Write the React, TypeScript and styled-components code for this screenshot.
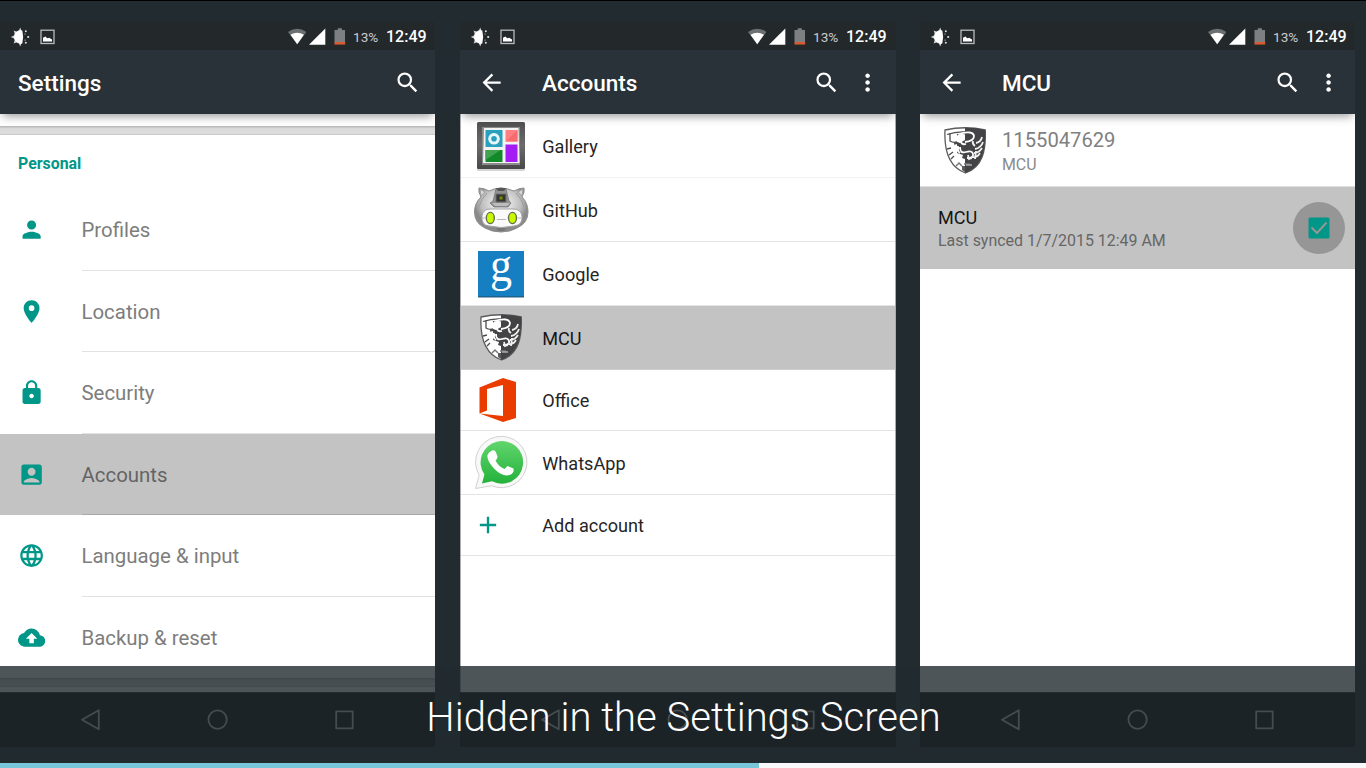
import React from 'react';
import styled, { createGlobalStyle, css } from 'styled-components';
import {
  MdPerson, MdPlace, MdLock, MdAccountBox, MdLanguage, MdBackup,
  MdSearch, MdArrowBack, MdMoreVert, MdAdd,
} from 'react-icons/md';

const TEAL = '#009688';

const GlobalStyle = createGlobalStyle`
  * { box-sizing: border-box; }
  body { margin: 0; background: #212b30; font-family: Roboto, sans-serif; overflow: hidden; }
  svg { display: block; flex: none; }
`;

const Slide = styled.main`
  position: relative;
  width: 1366px;
  height: 768px;
  background: #212b30;
  border-top: 1px solid #000;
  overflow: hidden;
`;

const Phones = styled.div`
  display: grid;
  grid-template-columns: 460px 460px 446px;
  padding-top: 21px;
`;

const Phone = styled.section<{ $wide?: boolean }>`
  display: flex;
  flex-direction: column;
  width: ${p => (p.$wide ? 436 : 435)}px;
  height: 725px;
  overflow: hidden;
`;

const StatusBar = styled.div<{ $wide?: boolean }>`
  display: flex;
  align-items: center;
  height: 28px;
  padding: 1px ${p => (p.$wide ? 9 : 8)}px 0 10px;
  background: #23282b;
  color: #fff;
`;

const StatusSpacer = styled.div`flex: 1;`;

const Percent = styled.span`
  width: 33px;
  margin-left: 7px;
  font-size: 13.6px;
  color: #c9cbcc;
  white-space: nowrap;
`;

const Clock = styled.span`
  width: 41px;
  font-size: 16px;
  font-weight: 500;
  white-space: nowrap;
`;

const AppBar = styled.header<{ $wide?: boolean }>`
  position: relative;
  z-index: 1;
  display: flex;
  align-items: center;
  flex: none;
  height: 64px;
  padding: 1px ${p => (p.$wide ? 15.5 : 14)}px 0 18px;
  background: #283238;
  color: #fff;
  box-shadow: 0 5px 9px -3px rgba(0, 0, 0, 0.42);
`;

const BackSlot = styled.div`width: 64px;`;

const Title = styled.h1`
  flex: 1;
  margin: 0;
  font-size: 22.5px;
  font-weight: 500;
`;

const MoreSlot = styled.div`margin: 0 -1px 0 14px;`;

const Body = styled.div<{ $edges?: boolean }>`
  flex: 1;
  display: flex;
  flex-direction: column;
  background: #fff;
  overflow: hidden;
  ${p => p.$edges && css`border: solid #a9adaf; border-width: 0 1px;`}
`;

const SectionGap = styled.div`
  flex: none;
  height: 9px;
  background: linear-gradient(#b4b4b4, #dadada 30%, #dedede 80%, #c6c6c6);
`;

const Blank = styled.div<{ $h: number }>`
  flex: none;
  height: ${p => p.$h}px;
`;

const Category = styled.h2`
  flex: none;
  height: 54px;
  margin: 0;
  padding: 18.5px 18px 0;
  font-size: 15.9px;
  line-height: 20px;
  font-weight: 700;
  color: ${TEAL};
`;

const Setting = styled.div<{ $active?: boolean }>`
  flex: none;
  display: grid;
  grid-template-columns: 81.5px 1fr;
  height: 81.5px;
  background: ${p => (p.$active ? '#c3c3c3' : 'transparent')};
`;

const SettingIcon = styled.div`
  display: flex;
  align-items: center;
  padding-left: 18px;
  color: ${TEAL};
`;

const SettingLabel = styled.div<{ $active?: boolean; $last?: boolean }>`
  display: flex;
  align-items: center;
  padding-top: 2px;
  font-size: 20.4px;
  color: ${p => (p.$active ? '#646464' : '#7d7d7d')};
  border-bottom: ${p => (p.$last ? 0 : 1.5)}px solid ${p => (p.$active ? '#a8a8a8' : '#e2e2e2')};
`;

const Account = styled.div<{ $h: number; $active?: boolean; $faint?: boolean }>`
  flex: none;
  display: grid;
  grid-template-columns: 81.3px 1fr;
  align-items: center;
  height: ${p => p.$h}px;
  font-size: 18.1px;
  color: ${p => (p.$active ? '#161616' : '#252525')};
  background: ${p => (p.$active ? '#c3c3c3' : 'transparent')};
  border-bottom: 1px solid ${p => (p.$active ? '#cfcfcf' : p.$faint ? '#f2f2f2' : '#e4e4e4')};
`;

const AccountLabel = styled.span`padding-top: 1px;`;

const AccountIcon = styled.div`
  padding-left: 12px;
  color: ${TEAL};
`;

const Identity = styled.div`
  display: grid;
  grid-template-columns: 82px 1fr;
  flex: none;
  height: 73px;
  align-items: center;
  border-bottom: 1px solid #dedede;
`;

const IdentityIcon = styled.div`padding-left: 24px;`;

const IdentityName = styled.div`
  margin-top: 4px;
  font-size: 20.2px;
  line-height: 25px;
  color: #808080;
`;

const IdentityType = styled.div`
  font-size: 15.9px;
  line-height: 23px;
  color: #8a8a8a;
`;

const SyncRow = styled.div`
  display: flex;
  align-items: center;
  justify-content: space-between;
  flex: none;
  height: 82px;
  padding: 0 10px 0 18px;
  background: #c3c3c3;
`;

const SyncTitle = styled.div`
  margin-top: 3px;
  font-size: 18.1px;
  line-height: 22px;
  color: #161616;
`;

const SyncTime = styled.div`
  font-size: 15.95px;
  line-height: 24px;
  color: #666;
`;

const Ripple = styled.div`
  display: grid;
  place-items: center;
  width: 52px;
  height: 52px;
  border-radius: 50%;
  background: #969696;
`;

const NavBar = styled.nav`
  display: flex;
  flex: none;
  justify-content: space-between;
  align-items: center;
  height: 55px;
  padding: 0 80px 1px 80px;
  background: #050505;
  border-top: 1px solid #30383b;
`;

const Caption = styled.div`
  position: absolute;
  left: 0;
  right: 0;
  top: 665px;
  height: 97px;
  padding: 25px 0 0 1px;
  background: rgba(33, 43, 48, 0.8);
  color: #fff;
  font-size: 40px;
  line-height: 54px;
  font-weight: 300;
  text-align: center;
  white-space: nowrap;
`;

const Track = styled.div`
  position: absolute;
  left: 0;
  right: 0;
  bottom: 0;
  height: 5px;
  background: #f9f8fb;
`;

const Progress = styled.div`
  width: 759px;
  height: 5px;
  background: #76c5d8;
`;

const StatusIcons = () => (
  <>
    <svg width="21" height="20" viewBox="0 0 21 20">
      <path d="M12.300 3.600Q14 10 12.300 16.400A6.600 6.600 0 0 1 3.900 10A6.600 6.600 0 0 1 12.300 3.600z" fill="#fff" />
      <path d="M10.200 .4l1.600 4H8.600zM10.200 19.400l1.600-4H8.600zM.8 10l4.200-2v4zM3.600 3.600l4.200 1.300-2.800 2.800zM3.600 16.400l4.200-1.300-2.800-2.800z" fill="#fff" opacity=".8" />
      <g fill="#fff" opacity=".85"><circle cx="15.800" cy="4.300" r="1" /><circle cx="18.200" cy="10" r="1.100" /><circle cx="15.800" cy="15.700" r="1" /><circle cx="15" cy="7" r=".6" /><circle cx="15" cy="13" r=".6" /></g>
    </svg>
    <svg width="24" height="20" viewBox="0 0 24 20">
      <rect x="10" y="3.200" width="13" height="13.300" fill="none" stroke="#b9bbbc" strokeWidth="1.3" />
      <path d="M12 14.600v-3.800l2.400-1.300 1.800 1.800 2-.6 2.800 1.800v2.100z" fill="#fff" />
    </svg>
    <StatusSpacer />
    <svg width="58" height="20" viewBox="0 0 58 20">
      <path d="M0 5Q9.200-1.700 18.400 5L9.200 17.300z" fill="#6c7072" />
      <path d="M2.500 7.800Q9.200 3.600 15.900 7.800L9.200 17.300z" fill="#fff" />
      <path d="M37.300 1.400v16.300H21z" fill="#fff" />
      <path d="M46.500 3h3.200V1.300h4.200V3H57v12.700H46.500z" fill="#7c8083" />
      <path d="M46.500 15h10.700v2.600H46.500z" fill="#d75a32" />
    </svg>
    <Percent>13%</Percent>
    <Clock>12:49</Clock>
  </>
);

const NavIcons = () => (
  <>
    <svg width="22" height="24" viewBox="0 0 22 24" fill="none" stroke="#cfcfcf" strokeWidth="1.8" strokeLinejoin="round"><path d="M18.800 2.300v19L2 11.800z" /></svg>
    <svg width="22" height="24" viewBox="0 0 22 24" fill="none" stroke="#cfcfcf" strokeWidth="1.8"><circle cx="10.600" cy="11.600" r="9.200" /></svg>
    <svg width="22" height="24" viewBox="0 0 22 24" fill="none" stroke="#cfcfcf" strokeWidth="1.8" strokeLinejoin="round"><rect x="3.200" y="3.300" width="16.500" height="17" /></svg>
  </>
);

const Shield = () => (
  <svg width="42" height="47" viewBox="0 0 42 47">
    <path d="M1 3Q21-1.500 41.300 3C42 23 39 40 21.500 46C5 40 0 23 1 3z" fill="#fff" stroke="#5c5c5e" strokeWidth="1.3" />
    <path d="M21 .8Q31 .6 41 3C42 23 38.500 40 21 46z" fill="#434345" />
    <path d="M3 7.500q9-3 18-2.500M6 6v8q3 2 7 1M13 8q4-3 8-1M14 16l-4 1M3 22l4-1M5 28l4-3M7 32l3-3" fill="none" stroke="#4c4c4e" strokeWidth="1.3" />
    <path d="M13 15l3 1 5-3v19l-3-1 1-3-6-2 1-3 2-2-3-2z" fill="#454547" />
    <path d="M12 39l3-3 3 3M20 37h6" fill="none" stroke="#777" strokeWidth="1.5" />
    <path d="M21 34v5h-3v4l3 2z" fill="#5a5a5c" />
    <path d="M14 7q15-4 16 2 0 5-9 6M17 15q1 3 5 2M16 20q0 7 6 5t7 2-6 4M14 19q-1 5 2 7" fill="none" stroke="#fff" strokeWidth="1.8" />
    <path d="M38 10q-1 5-6 6M39 15q-2 6-8 7M38 21q-3 5-8 5M36 26q-3 5-8 4M31 19q-3-2-2-5M24 28l1 4 3-1M32 24l-1 8" fill="none" stroke="#f0f0f0" strokeWidth="1.8" />
    <path d="M22 38h6" stroke="#bbb" strokeWidth="1.3" />
  </svg>
);

const Gallery = () => (
  <svg width="54" height="54" viewBox="0 0 54 54">
    <defs><linearGradient id="frame" x2="0" y2="1"><stop stopColor="#505050" /><stop offset=".5" stopColor="#6b6b6b" /><stop offset="1" stopColor="#484848" /></linearGradient></defs>
    <rect x="4" y="5" width="48" height="47" rx="1" fill="#d5d5d5" />
    <rect x="4" y="3" width="48" height="47" rx="1.500" fill="url(#frame)" />
    <path d="M9 8h38v38H9z" fill="#8b8b8b" />
    <path d="M11 9h34.500l1 35h-36.500z" fill="#f3f3f3" />
    <path d="M12.500 11h17v17h-17z" fill="#29a0bd" />
    <circle cx="21" cy="19.800" r="4.300" fill="none" stroke="#e7f8fc" strokeWidth="3" />
    <path d="M32.500 11h12v11.500h-12z" fill="#ff7f83" />
    <path d="M32.500 22.500l12-11.500v11.500z" fill="#fa6b70" />
    <path d="M12.500 31h17v12h-17z" fill="#138a29" /><path d="M12.500 31h15l-15 10z" fill="#41a352" />
    <path d="M32.500 25.500h12v17.500h-12z" fill="#a31cf3" />
  </svg>
);

const GitHub = () => (
  <svg width="56" height="50" viewBox="0 0 56 50">
    <defs><radialGradient id="helmet" cy=".35"><stop offset=".2" stopColor="#ededed" /><stop offset=".75" stopColor="#bdbdbd" /><stop offset="1" stopColor="#8a8a8a" /></radialGradient></defs>
    <path d="M8 12q-3-5-2-9 5 0 10 3 6-3 12-3t13 3q5-3 10-3 1 4-2 9 6 6 6 15 0 11-11 16-7 4-16 4t-16-4Q1.500 38 1.500 27q0-9 6.500-15z" fill="url(#helmet)" stroke="#8c8c8c" strokeWidth="1" />
    <path d="M7 4l5 3-4 4zM50 4l-5 3 4 4z" fill="#d6d6d6" stroke="#9b9b9b" strokeWidth=".8" />
    <path d="M14 8q-6 6-8 14M43 8q6 6 8 14" fill="none" stroke="#9d9d9d" />
    <path d="M9 31q1-7 8-7h23q8 0 9 7 1 9-8 10l-8 1q-5 1-9 0l-8-1q-8-1-7-10z" fill="#fafafa" stroke="#a3a3a3" />
    <path d="M20 16l3-12q5-2 10 0l3 12 2 2-3 4H21l-4-4z" fill="#919191" stroke="#747474" strokeWidth=".8" />
    <path d="M23 3h10l-2 3h-6z" fill="#555" />
    <path d="M23 9h10v8H23z" fill="#343630" stroke="#707070" /><path d="M26.500 11.500h3v3h-3z" fill="#778900" />
    <path d="M19 18h18l-3 3H22z" fill="#bcbcbc" />
    <ellipse cx="17.300" cy="33" rx="4" ry="5.600" fill="#c7fa00" stroke="#686d50" strokeWidth="1.4" />
    <ellipse cx="39.500" cy="33" rx="4" ry="5.600" fill="#c7fa00" stroke="#686d50" strokeWidth="1.4" />
    <path d="M24 34.500h9M9 33h3M45 33h4" stroke="#b8b8b8" /><path d="M23 43h10l-2 3h-6z" fill="#777" />
  </svg>
);

const Google = () => (
  <svg width="54" height="50" viewBox="0 0 54 50" overflow="visible">
    <path d="M5 3h46v45.500H5z" fill="#1f638d" /><path d="M5 2h46v45H5z" fill="#167fc2" />
    <text x="17" y="31.500" fontFamily="Liberation Serif, serif" fontSize="48" textLength="22" lengthAdjust="spacingAndGlyphs" fill="#fff">g</text>
  </svg>
);

const Office = () => (
  <svg width="48" height="48" viewBox="0 0 48 48">
    <path d="M6.500 11.500L30 2l13 4v36l-13 4-23.500-8.500 23.500 2.500V9L14 13v21.500l-7.500 3z" fill="#eb3c00" />
  </svg>
);

const WhatsApp = () => (
  <svg width="56" height="56" viewBox="1 1 56 56">
    <defs><linearGradient id="bubble" gradientUnits="userSpaceOnUse" x1="0" x2="0" y1="7" y2="50"><stop stopColor="#61d66d" /><stop offset="1" stopColor="#24b13b" /></linearGradient></defs>
    <path d="M7.200 41.200A25.700 25.700 0 1 1 19.500 51.800L3.500 54.500z" fill="#f8f8f8" stroke="#d2d2d2" />
    <path d="M12.400 40.500A21.300 21.300 0 1 1 20 47.200L10 49.500z" fill="url(#bubble)" />
    <path d="M20 16.500q3-1 4 2l1.500 4q0 2-2 4 3 6 9 8.500l3-3 6 2.500q1 5-4 6.500-7 2-15-6t-7-14q1-3 4.500-4.500z" fill="#fff" />
  </svg>
);

const settings = [
  { label: 'Profiles', Icon: MdPerson },
  { label: 'Location', Icon: MdPlace },
  { label: 'Security', Icon: MdLock },
  { label: 'Accounts', Icon: MdAccountBox, active: true },
  { label: 'Language & input', Icon: MdLanguage },
  { label: 'Backup & reset', Icon: MdBackup, last: true },
];

const IndentedShield = styled.div`padding-left: 7px;`;
const AddIcon = styled.div`padding-left: 0.6px;`;

const accounts = [
  { label: 'Gallery', h: 64, icon: <Gallery />, faint: true },
  { label: 'GitHub', h: 64, icon: <GitHub /> },
  { label: 'Google', h: 64, icon: <Google /> },
  { label: 'MCU', h: 64, icon: <IndentedShield><Shield /></IndentedShield>, active: true },
  { label: 'Office', h: 61, icon: <Office /> },
  { label: 'WhatsApp', h: 64, icon: <WhatsApp /> },
  { label: 'Add account', h: 61, icon: <AddIcon><MdAdd size={28} /></AddIcon> },
];

const SettingsPhone = () => (
  <Phone>
    <StatusBar><StatusIcons /></StatusBar>
    <AppBar><Title>Settings</Title><MdSearch size={27.2} /></AppBar>
    <Body>
      <Blank $h={12} />
      <SectionGap />
      <Category>Personal</Category>
      {settings.map(({ label, Icon, active, last }) => (
        <Setting key={label} $active={active}>
          <SettingIcon><Icon size={27.2} /></SettingIcon>
          <SettingLabel $active={active} $last={last}>{label}</SettingLabel>
        </Setting>
      ))}
      <SectionGap />
    </Body>
    <NavBar><NavIcons /></NavBar>
  </Phone>
);

const DetailBar = ({ title, wide }: { title: string; wide?: boolean }) => (
  <AppBar $wide={wide}>
    <BackSlot><MdArrowBack size={27.2} /></BackSlot>
    <Title>{title}</Title>
    <MdSearch size={27.2} />
    <MoreSlot><MdMoreVert size={27.2} /></MoreSlot>
  </AppBar>
);

const AccountsPhone = () => (
  <Phone $wide>
    <StatusBar $wide><StatusIcons /></StatusBar>
    <DetailBar title="Accounts" wide />
    <Body $edges>
      {accounts.map(a => (
        <Account key={a.label} $h={a.h} $active={a.active} $faint={a.faint}>
          <AccountIcon>{a.icon}</AccountIcon>
          <AccountLabel>{a.label}</AccountLabel>
        </Account>
      ))}
    </Body>
    <NavBar><NavIcons /></NavBar>
  </Phone>
);

const SyncPhone = () => (
  <Phone>
    <StatusBar><StatusIcons /></StatusBar>
    <DetailBar title="MCU" />
    <Body>
      <Identity>
        <IdentityIcon><Shield /></IdentityIcon>
        <div>
          <IdentityName>1155047629</IdentityName>
          <IdentityType>MCU</IdentityType>
        </div>
      </Identity>
      <SyncRow>
        <div>
          <SyncTitle>MCU</SyncTitle>
          <SyncTime>Last synced 1/7/2015 12:49 AM</SyncTime>
        </div>
        <Ripple>
          <svg width="22" height="22" viewBox="0 0 22 22">
            <rect x=".5" y=".5" width="21" height="21" rx="1.500" fill={TEAL} />
            <path d="M3.500 10.500l5.500 5.500L18.500 5.500" fill="none" stroke="#969696" strokeWidth="2" />
          </svg>
        </Ripple>
      </SyncRow>
    </Body>
    <NavBar><NavIcons /></NavBar>
  </Phone>
);

export default function App() {
  return (
    <>
      <GlobalStyle />
      <Slide>
        <Phones>
          <SettingsPhone />
          <AccountsPhone />
          <SyncPhone />
        </Phones>
        <Caption>Hidden in the Settings Screen</Caption>
        <Track><Progress /></Track>
      </Slide>
    </>
  );
}
